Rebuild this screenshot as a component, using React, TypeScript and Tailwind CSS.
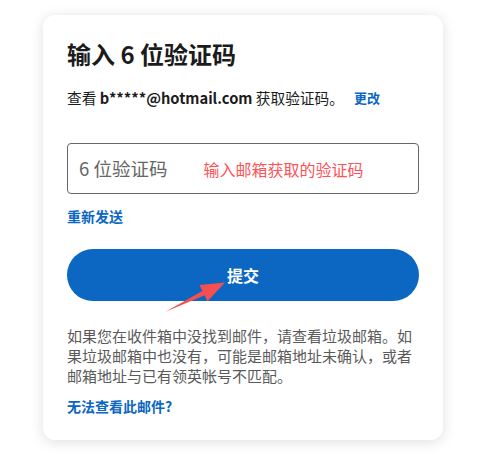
export default function App() {
  const font = { fontFamily: '"Noto Sans CJK SC", "Noto Sans", sans-serif' };
  return (
    <div className="w-[483px] h-[456px] bg-white" style={font}>
      <div className="pt-[15px] pl-[43px]">
        <div className="relative w-[400px] bg-white rounded-[12px] shadow-[0_2px_14px_rgba(0,0,0,0.13)] px-[24px] pt-[24px] pb-[24px]">
          <h1 className="text-[24px] leading-[30px] font-bold text-[#1b1b1b]">输入 6 位验证码</h1>
          <div className="mt-[19px] flex items-center text-[14.7px] leading-[20px] text-[#1b1b1b]">
            <span>查看 <span className="font-bold">b*****@hotmail.com</span> 获取验证码。</span>
            <span className="ml-[10px] text-[13px] font-bold text-[#0b67c2]">更改</span>
          </div>
          <div className="mt-[35px] h-[51px] border border-[#666] rounded-[4px] flex items-center pl-[11px]">
            <span className="text-[18.5px] text-[#666]">6 位验证码</span>
            <span className="ml-[36px] text-[16px] text-[#ff5257]">输入邮箱获取的验证码</span>
          </div>
          <div className="mt-[12px] text-[14px] leading-[20px] font-bold text-[#0b67c2]">重新发送</div>
          <button className="mt-[23px] w-full h-[52px] rounded-full bg-[#0b67c2] text-white text-[16px] font-bold flex items-center justify-center">
            提交
          </button>
          <p className="mt-[25px] text-[15px] leading-[20px] text-[#5a5a5a]">
            如果您在收件箱中没找到邮件，请查看垃圾邮箱。如果垃圾邮箱中也没有，可能是邮箱地址未确认，或者邮箱地址与已有领英帐号不匹配。
          </p>
          <div className="mt-[10px] text-[14px] leading-[20px] font-bold text-[#0b67c2]">无法查看此邮件?</div>
          <svg className="absolute left-0 top-0 pointer-events-none" width="400" height="426" viewBox="0 0 400 426">
            <polygon points="122,297 159.4,275.9 156.5,270 182,267.5 164.5,286.2 161.6,280.3" fill="#f5504f" />
          </svg>
        </div>
      </div>
    </div>
  );
}
